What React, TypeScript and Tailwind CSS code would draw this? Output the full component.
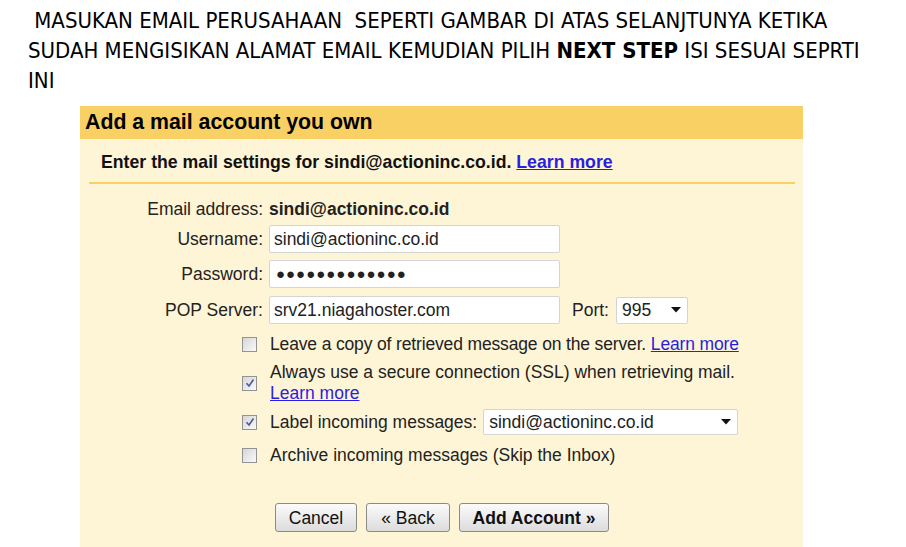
import React from "react";

const Check = ({ checked }: { checked?: boolean }) => (
  <div className="w-[15px] h-[15px] border border-[#939393] bg-gradient-to-br from-[#d6d6d6] to-[#fafafa] flex items-center justify-center shrink-0">
    {checked && (
      <svg width="10" height="10" viewBox="0 0 10 10">
        <path d="M1.5 5.2 L4 8 L8.5 1.5" fill="none" stroke="#4a5a9a" strokeWidth="1.6" />
      </svg>
    )}
  </div>
);

const Arrow = () => (
  <svg width="10" height="6" viewBox="0 0 10 6">
    <path d="M0 0 L10 0 L5 5.5 Z" fill="#111" />
  </svg>
);

const Btn = ({ children, w, bold }: { children: React.ReactNode; w: string; bold?: boolean }) => (
  <button
    className={`${w} h-[29px] rounded-[3px] border border-[#8a8a8a] bg-gradient-to-b from-[#fbfbfb] to-[#dcdcdc] text-[17.5px] text-[#111] ${bold ? "font-bold" : ""}`}
  >
    {children}
  </button>
);

export default function App() {
  return (
    <div className="w-[906px] h-[547px] bg-white overflow-hidden" style={{ fontFamily: '"Liberation Sans", Arial, sans-serif' }}>
      <div
        className="pl-[28px] pt-[6px] text-[22px] leading-[30px] text-black whitespace-nowrap"
        style={{ fontFamily: '"DejaVu Sans Condensed", "DejaVu Sans", sans-serif' }}
      >
        <div>&nbsp;MASUKAN EMAIL PERUSAHAAN&nbsp; SEPERTI GAMBAR DI ATAS SELANJTUNYA KETIKA</div>
        <div>
          SUDAH MENGISIKAN ALAMAT EMAIL KEMUDIAN PILIH <b>NEXT STEP</b> ISI SESUAI SEPRTI
        </div>
        <div>INI</div>
      </div>
      <div className="ml-[80px] mt-[10px] w-[723px] h-[441px] bg-[#fef5d6]">
        <div className="h-[33px] bg-[#f9d064] pl-[5px] flex items-center text-[21.3px] font-bold text-black">
          Add a mail account you own
        </div>
        <div className="pl-[21px] pt-[10px] h-[42px] text-[17.7px] font-bold text-[#111]">
          Enter the mail settings for sindi@actioninc.co.id.{" "}
          <span className="text-[#2a1ee0] underline">Learn more</span>
        </div>
        <div className="ml-[9px] w-[706px] h-[2px] bg-[#f9d064] mt-[1px]" />
        <div className="text-[17.5px] text-[#222] pt-[13px]">
          <div className="grid grid-cols-[183px_auto] gap-x-[6px] items-center">
            <div className="text-right h-[24px] leading-[24px]">Email address:</div>
            <div className="font-bold h-[24px] leading-[24px]">sindi@actioninc.co.id</div>
            <div className="text-right mt-[4px]">Username:</div>
            <div className="mt-[4px] w-[291px] h-[28px] bg-white border border-[#d4d4d4] rounded-[2px] pl-[4px] flex items-center">
              sindi@actioninc.co.id
            </div>
            <div className="text-right mt-[7px]">Password:</div>
            <div className="mt-[7px] w-[291px] h-[28px] bg-white border border-[#d4d4d4] rounded-[2px] pl-[6px] flex items-center text-[15px] tracking-[1px]">
              ●●●●●●●●●●●●●
            </div>
            <div className="text-right mt-[8px]">POP Server:</div>
            <div className="mt-[8px] flex items-center">
              <div className="w-[291px] h-[28px] bg-white border border-[#d4d4d4] rounded-[2px] pl-[4px] flex items-center">
                srv21.niagahoster.com
              </div>
              <span className="ml-[12px]">Port:</span>
              <div className="ml-[7px] w-[72px] h-[27px] bg-white border border-[#d4d4d4] rounded-[2px] pl-[5px] pr-[6px] flex items-center justify-between">
                <span>995</span>
                <Arrow />
              </div>
            </div>
          </div>
          <div className="pl-[162px] mt-[9px] flex flex-col">
            <div className="flex items-center h-[22px]">
              <Check />
              <span className="ml-[13px] tracking-[-0.15px]">
                Leave a copy of retrieved message on the server.{" "}
                <span className="text-[#2a1ee0] underline">Learn more</span>
              </span>
            </div>
            <div className="flex items-center mt-[7px]">
              <Check checked />
              <div className="ml-[13px] leading-[21px]">
                Always use a secure connection (SSL) when retrieving mail.
                <br />
                <span className="text-[#2a1ee0] underline">Learn more</span>
              </div>
            </div>
            <div className="flex items-center mt-[5px]">
              <Check checked />
              <span className="ml-[13px]">Label incoming messages:</span>
              <div className="ml-[6px] w-[255px] h-[26px] bg-white border border-[#d4d4d4] rounded-[2px] pl-[5px] pr-[6px] flex items-center justify-between">
                <span>sindi@actioninc.co.id</span>
                <Arrow />
              </div>
            </div>
            <div className="flex items-center h-[22px] mt-[9px]">
              <Check />
              <span className="ml-[13px]">Archive incoming messages (Skip the Inbox)</span>
            </div>
          </div>
          <div className="pl-[195px] mt-[37px] flex gap-[9px]">
            <Btn w="w-[82px]">Cancel</Btn>
            <Btn w="w-[84px]">« Back</Btn>
            <Btn w="w-[150px]" bold>
              Add Account »
            </Btn>
          </div>
        </div>
      </div>
    </div>
  );
}
